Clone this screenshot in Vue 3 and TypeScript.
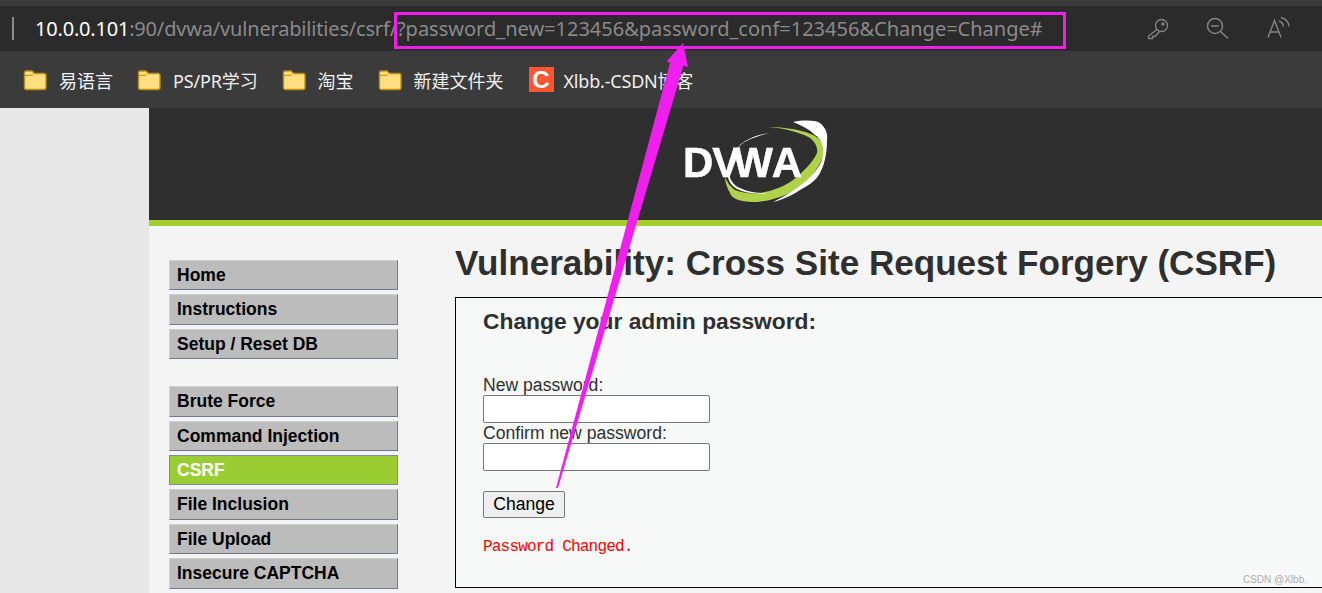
<script setup lang="ts">
const bookmarks = ['易语言', 'PS/PR学习', '淘宝', '新建文件夹']
const navA = ['Home', 'Instructions', 'Setup / Reset DB']
const navB = ['Brute Force', 'Command Injection', 'CSRF', 'File Inclusion', 'File Upload', 'Insecure CAPTCHA', '']
</script>

<template>
  <div class="page">
    <div class="browser">
      <div class="addr">
        <span class="sep"></span>
        <span class="url"><b>10.0.0.101</b><i>:90/dvwa/vulnerabilities/csrf/</i>?password_new=123456&amp;password_conf=123456&amp;Change=Change#</span>
        <div class="tools">
          <svg width="26" height="26" viewBox="0 0 26 26" fill="none" stroke="#858585" stroke-width="1.3">
            <circle cx="16.5" cy="9.5" r="6" />
            <circle cx="18" cy="8" r="1" />
            <path d="M12 13.5 L3.5 20 V22.5 H7.5 V20.5 H10 L14.5 15.5" />
          </svg>
          <svg width="26" height="26" viewBox="0 0 26 26" fill="none" stroke="#858585" stroke-width="1.5">
            <circle cx="10" cy="10" r="7.5" />
            <path d="M6 10 H14 M15.5 15.5 L23 22.5" />
          </svg>
          <svg width="26" height="26" viewBox="0 0 26 26" fill="none" stroke="#858585" stroke-width="1.4">
            <path d="M3 21.5 L9.5 4.5 L16 21.5 M5.2 16 H13.8" />
            <path d="M14 5 Q18 6.5 18.5 10.5 M16 1.5 Q23.5 3.5 24 10.5" />
          </svg>
        </div>
      </div>
      <div class="marks">
        <div v-for="b in bookmarks" :key="b" class="mark">
          <svg width="24" height="22" viewBox="0 0 24 22">
            <path d="M1.5 4 Q1.5 2 3.5 2 H9 L11.5 4.5 H21 Q23 4.5 23 6.5 V18.5 Q23 20.5 21 20.5 H3.5 Q1.5 20.5 1.5 18.5 Z" fill="#ffdf80" stroke="#bd8f12" stroke-width="1.4" />
            <path d="M2 6.5 L10 6" stroke="#bd8f12" stroke-width="1.2" />
          </svg>
          <span>{{ b }}</span>
        </div>
        <div class="mark csdn">
          <span class="c-logo">C</span>
          <span>Xlbb.-CSDN博客</span>
        </div>
      </div>
    </div>
    <div class="site">
      <div class="gutter"></div>
      <div class="wrap">
        <header class="head">
          <svg width="143" height="86" viewBox="0 0 143 86" class="logo">
            <path d="M83 7 C105 7 128 12 135 20 C141 27 140 33 138 37 C132 50 125 60 115 67 C100 77 82 82 68 82 C55 82 46 78 45 73 C42 68 40 62 40 57 C43 64 47 68 50 70 C58 73 66 74 75 73 C88 71 100 66 108 60 C118 52 128 42 132 33 C133 27 130 22 125 18 C115 12 98 8 83 7 Z" fill="#b0d24a" />
            <path d="M108 2 C118 0 130 0 135 3 C141 8 143 14 142 20 C142 32 140 44 135 53 C130 62 122 66 115 70 C106 76 96 80 88 82 C98 77 110 70 120 62 C130 53 137 44 138 35 C140 26 135 18 130 15 C124 9 116 5 108 2 Z" fill="#fff" />
            <path d="M85 13 C72 16 62 20 58 23 C50 30 46 37 45 43 C43 50 44 56 46 60 C49 65 52 67 55 68 C63 72 72 73 82 73 C72 74.5 60 73 52 69 C46 65 42 60 43 52 C43 42 48 32 56 24 C64 18 75 14 85 13 Z" fill="#fff" />
            <text class="logo-text" x="-2" y="57" dx="0 -1 -7 1">DVWA</text>
          </svg>
        </header>
        <div class="bar"></div>
        <main class="main">
          <nav class="nav">
            <div class="group">
              <a v-for="n in navA" :key="n" class="item">{{ n }}</a>
            </div>
            <div class="group">
              <a v-for="(n, i) in navB" :key="i" class="item" :class="{ on: n === 'CSRF' }">{{ n }}</a>
            </div>
          </nav>
          <section class="body">
            <h1>Vulnerability: Cross Site Request Forgery (CSRF)</h1>
            <div class="box">
              <h3>Change your admin password:</h3>
              <form class="form">
                <label>New password:</label>
                <input type="password" />
                <label>Confirm new password:</label>
                <input type="password" />
                <button type="button">Change</button>
              </form>
              <pre>Password Changed.</pre>
              <span class="wm">CSDN @Xlbb.</span>
            </div>
          </section>
        </main>
      </div>
    </div>
    <div class="hl"></div>
    <svg class="arrow" width="1322" height="593" viewBox="0 0 1322 593">
      <polygon points="683,43 667,61 670,63 556,488 558,488 683.5,65.5 688,67" fill="#f01ff0" />
    </svg>
  </div>
</template>

<style>
html, body { margin: 0; background: #f4f4f4; }
</style>

<style scoped>
.page { position: relative; width: 1322px; height: 593px; overflow: hidden; font-family: "Liberation Sans", Arial, sans-serif; }
.browser { background: #3b3b3b; height: 108px; padding-top: 6px; box-sizing: border-box; }
.addr { height: 45px; background: #2b2b2b; display: flex; align-items: center; font-family: "Noto Sans", "Open Sans", sans-serif; }
.sep { width: 2px; height: 23px; background: #8c8c8c; margin-left: 12px; flex: none; }
.url { margin-left: 21px; font-size: 20px; color: #8a8a8a; white-space: nowrap; }
.url b { font-weight: 400; color: #fff; letter-spacing: -0.2px; }
.url i { font-style: normal; letter-spacing: -0.18px; }
.tools { margin-left: auto; display: flex; gap: 34px; margin-right: 31px; }
.marks { height: 57px; display: flex; align-items: center; padding-left: 23px; color: #f0f0f0; font-size: 18px; }
.mark { display: flex; align-items: center; gap: 12px; margin-right: 24px; }
.mark span { font-family: "Noto Sans", "Noto Sans CJK SC", sans-serif; }
.mark:nth-child(2) span { letter-spacing: -0.15px; }
.mark.csdn { gap: 10px; margin-left: 1px; }
.mark.csdn span:last-child { letter-spacing: -0.2px; }
.c-logo { width: 25px; height: 25px; background: #fc5531; color: #fff; font-weight: 700; font-size: 24px; display: flex; align-items: center; justify-content: center; }
.mark .c-logo { font-family: "Liberation Sans", sans-serif; }
.site { display: flex; height: 485px; }
.gutter { width: 149px; background: #e7e7e7; flex: none; }
.wrap { flex: 1; min-width: 0; background: #f4f4f4; }
.head { height: 112px; background: #2f2f2f; padding-left: 536px; box-sizing: border-box; }
.logo { display: block; padding-top: 12px; filter: blur(0.35px); overflow: visible; }
.logo-text { font-family: "Liberation Sans", sans-serif; font-weight: 700; font-size: 42px; fill: #fff; stroke: #fff; stroke-width: 0.5px; }
.bar { height: 6px; background: #a6cd30; }
.main { display: flex; padding-top: 34px; }
.nav { width: 229px; margin-left: 20px; flex: none; }
.group { margin-bottom: 27px; }
.item { display: block; height: 30.4px; margin-bottom: 4px; box-sizing: border-box; background: #bcbcbc; border: 1px solid; border-color: #d0d0d0 #6f7890 #6f7890 #d0d0d0; padding-left: 7px; font-size: 17.5px; font-weight: 700; line-height: 28px; color: #000; }
.item.on { background: #9acd32; color: #fff; border-color: #7b8cab; }
.body { margin-left: 57px; flex: 1; min-width: 0; white-space: nowrap; color: #2f2f2f; }
h1 { margin: -17px 0 14px; font-size: 35.1px; line-height: 40px; font-weight: 700; color: #2f2f2f; }
.box { position: relative; border: 1px solid #000; border-right: 0; background: #f7f9f9; height: 291px; padding-left: 27px; box-sizing: border-box; }
h3 { margin: 10px 0 0; font-size: 22.8px; line-height: 26px; font-weight: 700; color: #2f2f2f; }
.form { display: flex; flex-direction: column; align-items: flex-start; margin-top: 41px; font-size: 17.6px; }
label { line-height: 20px; }
input { width: 227px; height: 28px; box-sizing: border-box; border: 1px solid #767676; border-radius: 2px; background: #fff; margin: 0; padding: 0; }
button { margin-top: 20px; width: 82px; height: 27px; box-sizing: border-box; border: 1px solid #767676; border-radius: 2px; background: #efefef; font: 17.6px "Liberation Sans", sans-serif; color: #000; padding: 0; }
pre { margin: 19px 0 0; color: #f00; font: 16px/20px "Liberation Mono", monospace; letter-spacing: -0.8px; }
.wm { position: absolute; right: 15px; bottom: 2px; font-size: 10px; color: #aeaeae; }
.hl { position: absolute; left: 394px; top: 12px; width: 672px; height: 37px; box-sizing: border-box; border: 3px solid #ee1fe6; }
.arrow { position: absolute; left: 0; top: 0; pointer-events: none; }
</style>
